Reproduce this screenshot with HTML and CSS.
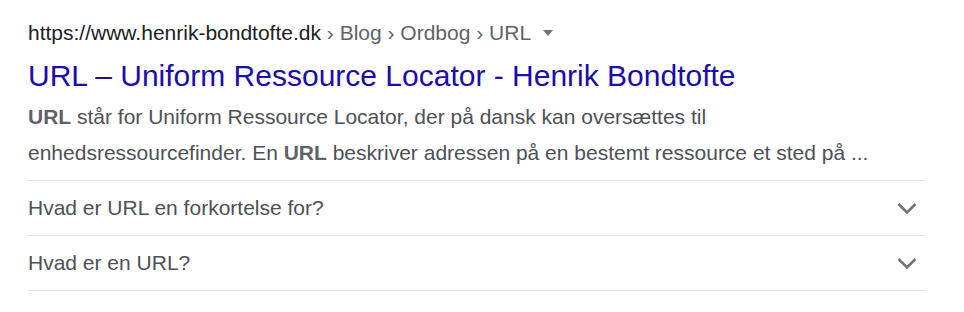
FILE: index.html
```html
<!DOCTYPE html>
<html lang="da">
<head>
<meta charset="utf-8">
<link rel="stylesheet" href="styles.css">
</head>
<body>
<div class="result">
  <div class="crumbs">
    <span class="site">https://www.henrik-bondtofte.dk</span><span class="path"> › Blog › Ordbog › URL</span>
    <svg class="caret" width="10" height="6" viewBox="0 0 10 6"><path d="M0 0h10L5 6z" fill="#70757a"/></svg>
  </div>
  <h3 class="title">URL – Uniform Ressource Locator - Henrik Bondtofte</h3>
  <p class="snippet"><b>URL</b> står for Uniform Ressource Locator, der på dansk kan oversættes til enhedsressourcefinder. En <b>URL</b> beskriver adressen på en bestemt ressource et sted på ...</p>
  <div class="faq">
    <div class="row"><span>Hvad er URL en forkortelse for?</span>
      <svg class="chev" width="24" height="24" viewBox="0 0 24 24"><path d="M3.5 8l8.5 8.5 8.5-8.5" fill="none" stroke="#70757a" stroke-width="2.6"/></svg></div>
    <div class="row"><span>Hvad er en URL?</span>
      <svg class="chev" width="24" height="24" viewBox="0 0 24 24"><path d="M3.5 8l8.5 8.5 8.5-8.5" fill="none" stroke="#70757a" stroke-width="2.6"/></svg></div>
  </div>
</div>
</body>
</html>
```
FILE: styles.css
```css
* { box-sizing: border-box; }
body {
  margin: 0;
  background: #fff;
  font-family: "Liberation Sans", Arial, sans-serif;
}
.result {
  width: 925px;
  padding: 21px 0 0 28px;
}
.crumbs {
  display: flex;
  align-items: center;
  font-size: 21px;
  line-height: 24px;
  height: 24px;
  white-space: pre;
}
.site { color: #202124; }
.path { color: #5f6368; }
.caret { margin-left: 12px; }
.title {
  margin: 11px 0 0;
  font-weight: normal;
  font-size: 30px;
  line-height: 40px;
  color: #1a0dab;
}
.snippet {
  margin: 3px 0 0;
  font-size: 21px;
  line-height: 36px;
  color: #4d5156;
}
.snippet b { color: #5f6368; }
.faq {
  margin-top: 9px;
  border-top: 1px solid #e3e3e3;
}
.row {
  display: flex;
  align-items: center;
  justify-content: space-between;
  height: 55px;
  border-bottom: 1px solid #e3e3e3;
  font-size: 21px;
  color: #4d5156;
  padding-right: 6px;
}
```
